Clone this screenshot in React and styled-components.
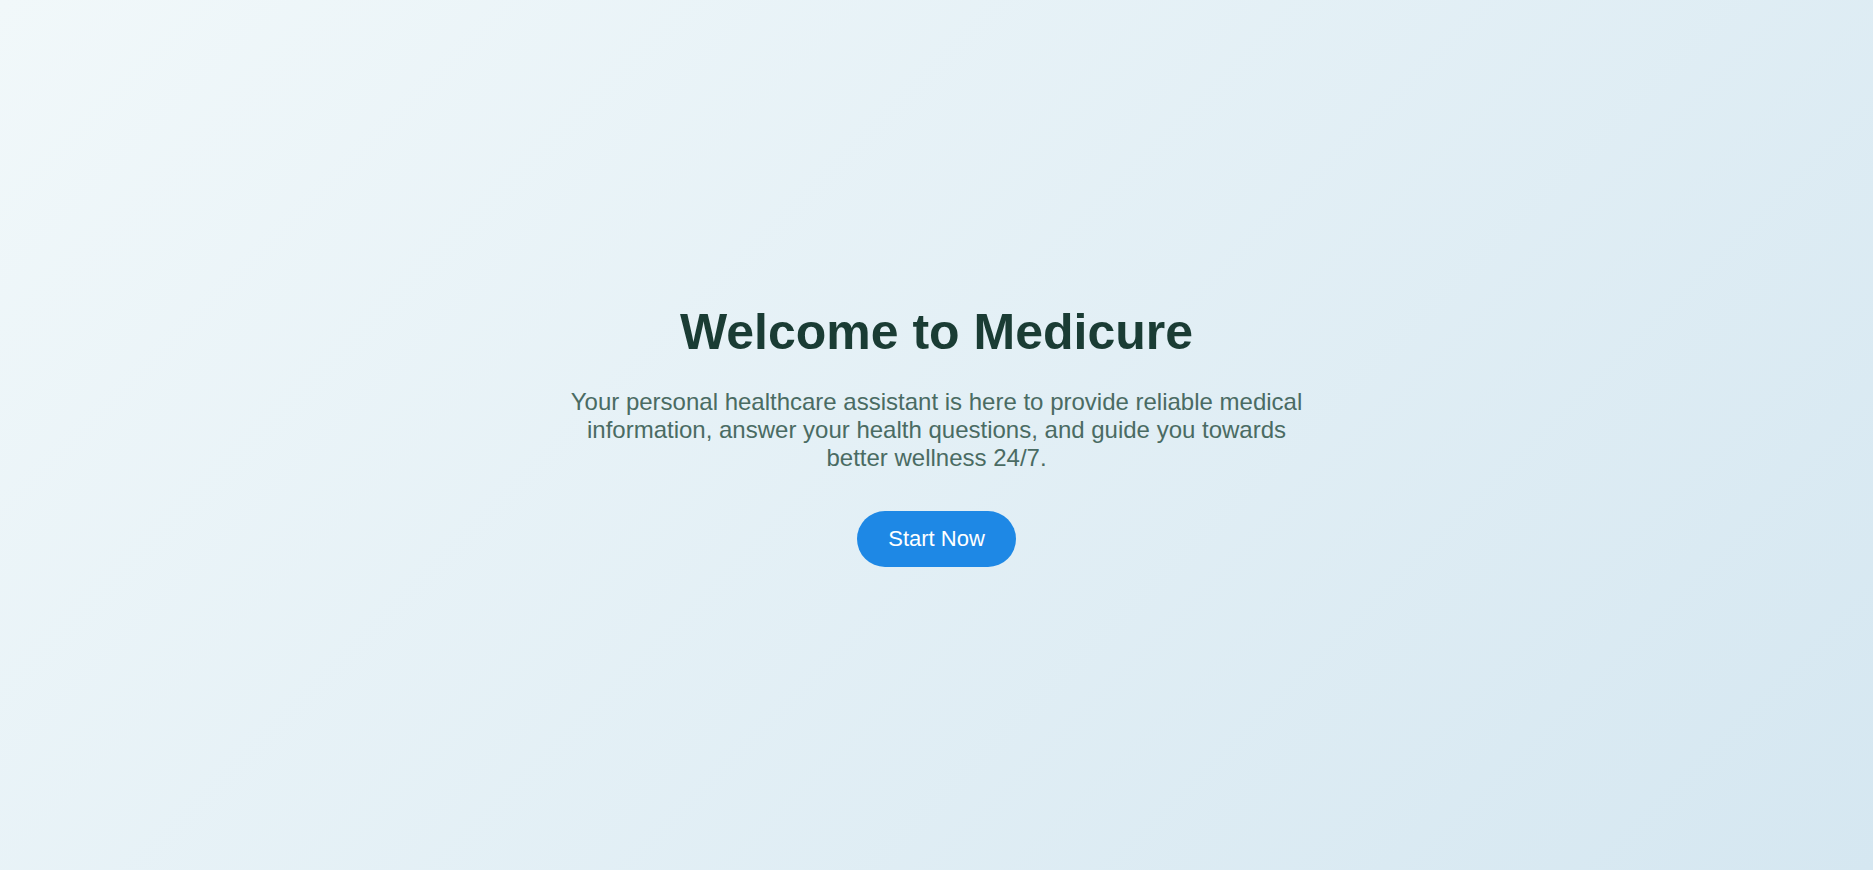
import React from 'react';
import styled, { createGlobalStyle } from 'styled-components';

const GlobalStyle = createGlobalStyle`
  html, body {
    margin: 0;
    padding: 0;
  }
  body {
    font-family: "Liberation Sans", Arial, sans-serif;
    background: linear-gradient(135deg, #f1f8fa 0%, #d5e7f1 100%);
    min-height: 100vh;
  }
`;

const Hero = styled.main`
  min-height: 100vh;
  display: flex;
  flex-direction: column;
  align-items: center;
  justify-content: center;
  text-align: center;
  box-sizing: border-box;
  padding: 0 20px;
`;

const Title = styled.h1`
  margin: 0 0 27px;
  font-size: 50px;
  font-weight: 700;
  color: #1a3c34;
`;

const Lead = styled.p`
  margin: 0 0 39px;
  max-width: 750px;
  font-size: 24px;
  color: #4a6b63;
`;

const StartButton = styled.button`
  font-family: inherit;
  font-size: 22px;
  color: #ffffff;
  background: #1e88e5;
  border: none;
  border-radius: 999px;
  padding: 15px 31px;
  cursor: pointer;

  &:hover {
    background: #1976d2;
  }
`;

export default function App() {
  return (
    <>
      <GlobalStyle />
      <Hero>
        <Title>Welcome to Medicure</Title>
        <Lead>
          Your personal healthcare assistant is here to provide reliable medical
          information, answer your health questions, and guide you towards
          better wellness 24/7.
        </Lead>
        <StartButton>Start Now</StartButton>
      </Hero>
    </>
  );
}
